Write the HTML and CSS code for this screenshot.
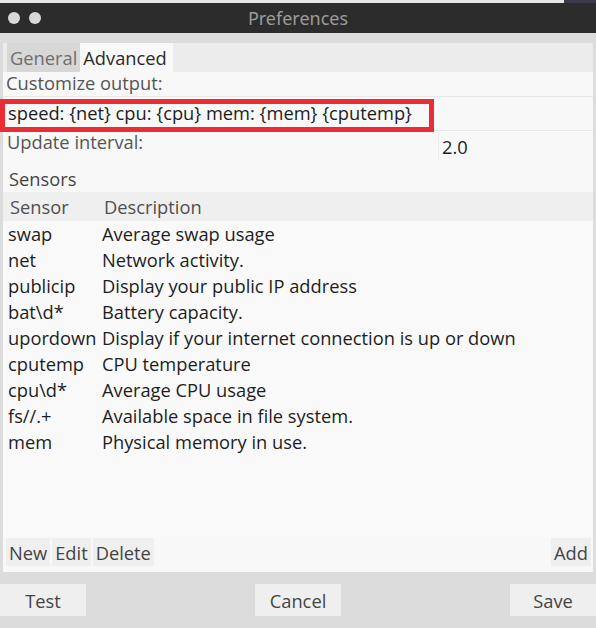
FILE: index.html
```html
<!DOCTYPE html>
<html>
<head>
<meta charset="utf-8">
<link rel="stylesheet" href="styles.css">
</head>
<body>
<div class="screen">
  <div class="topstrip"><div class="desk"></div></div>
  <div class="titlebar">
    <div class="dots"><span class="dot"></span><span class="dot"></span></div>
    <div class="title">Preferences</div>
  </div>
  <div class="window">
    <div class="panel">
      <div class="tabs">
        <div class="tab inactive">General</div>
        <div class="tab active">Advanced</div>
      </div>
      <div class="label customize">Customize output:</div>
      <div class="entry-row">
        <div class="entry">speed: {net} cpu: {cpu} mem: {mem} {cputemp}</div>
        <div class="highlight"></div>
      </div>
      <div class="interval-row">
        <div class="label interval">Update interval:</div>
        <div class="spin">2.0</div>
      </div>
      <div class="sensors-title">Sensors</div>
      <div class="table">
        <div class="thead"><span class="c1">Sensor</span><span class="c2">Description</span></div>
        <div class="row"><span class="c1">swap</span><span class="c2">Average swap usage</span></div>
        <div class="row"><span class="c1">net</span><span class="c2">Network activity.</span></div>
        <div class="row"><span class="c1">publicip</span><span class="c2">Display your public IP address</span></div>
        <div class="row"><span class="c1">bat\d*</span><span class="c2">Battery capacity.</span></div>
        <div class="row"><span class="c1">upordown</span><span class="c2">Display if your internet connection is up or down</span></div>
        <div class="row"><span class="c1">cputemp</span><span class="c2">CPU temperature</span></div>
        <div class="row"><span class="c1">cpu\d*</span><span class="c2">Average CPU usage</span></div>
        <div class="row"><span class="c1">fs//.+</span><span class="c2">Available space in file system.</span></div>
        <div class="row"><span class="c1">mem</span><span class="c2">Physical memory in use.</span></div>
      </div>
      <div class="tablebtns">
        <div class="btn small">New</div>
        <div class="btn small">Edit</div>
        <div class="btn small">Delete</div>
        <div class="spacer"></div>
        <div class="btn small">Add</div>
      </div>
    </div>
    <div class="footer">
      <div class="btn big">Test</div>
      <div class="btn big">Cancel</div>
      <div class="btn big">Save</div>
    </div>
  </div>
</div>
</body>
</html>
```
FILE: styles.css
```css
html, body {
  margin: 0;
  padding: 0;
}
body {
  background: #dcdcdc;
  font-family: "Open Sans", "Noto Sans", sans-serif;
  font-size: 18.3px;
  color: #2a2a2a;
}
.screen {
  width: 596px;
  height: 628px;
  overflow: hidden;
  display: flex;
  flex-direction: column;
}
.topstrip {
  height: 3px;
  background: #e6e6e6;
  display: flex;
  justify-content: flex-end;
}
.desk {
  width: 32px;
  background: #3b3a48;
}
.titlebar {
  height: 30px;
  background: #2c2c2c;
  display: flex;
  align-items: center;
  position: relative;
}
.dots {
  display: flex;
  gap: 9px;
  padding-left: 8px;
}
.dot {
  width: 12px;
  height: 12px;
  border-radius: 50%;
  background: #d9d9d9;
}
.title {
  position: absolute;
  left: 0;
  right: 0;
  text-align: center;
  color: #9b9b9b;
  font-family: "Noto Sans", sans-serif;
  font-size: 18px;
}
.window {
  flex: 1;
  padding: 10px 3px 0 3px;
  display: flex;
  flex-direction: column;
}
.panel {
  height: 529px;
  background: #f8f8f8;
  display: flex;
  flex-direction: column;
}
.tabs {
  height: 29px;
  background: #ececec;
  display: flex;
  padding-left: 4px;
}
.tab {
  display: flex;
  align-items: center;
  padding: 0 3px 0 3px;
  line-height: 29px;
}
.tab.inactive {
  background: #d7d7d7;
  color: #6e6e6e;
}
.tab.active {
  background: #f8f8f8;
  color: #2a2a2a;
  padding-right: 6px;
}
.label {
  color: #555;
}
.customize {
  height: 24px;
  line-height: 22px;
  padding-left: 3px;
}
.entry-row {
  position: relative;
  height: 33px;
  border-top: 1px solid #e8e8e8;
  border-bottom: 1px solid #e8e8e8;
  display: flex;
  align-items: center;
}
.entry {
  padding-left: 5px;
  color: #1e1e1e;
  padding-bottom: 3px;
}
.highlight {
  position: absolute;
  left: -3px;
  top: 2px;
  width: 424px;
  height: 23px;
  border: 5px solid #ea2d33;
}
.interval-row {
  display: flex;
  height: 30px;
}
.interval {
  flex: 0 0 431px;
  padding-left: 4px;
  line-height: 22px;
}
.spin {
  flex: 1;
  border-left: 1px solid #ededed;
  padding-left: 3px;
  line-height: 32px;
  color: #1e1e1e;
}
.sensors-title {
  height: 31px;
  line-height: 36px;
  padding-left: 6px;
  color: #444;
}
.table {
  flex: 1;
  background: #f9f9f9;
}
.thead {
  height: 28px;
  background: #efefef;
  display: flex;
  align-items: center;
  color: #505050;
  padding-bottom: 1px;
}
.row {
  height: 25.9px;
  display: flex;
  align-items: center;
  color: #1e1e1e;
}
.thead .c1 { width: 94px; padding-left: 7px; }
.row .c1 { width: 94px; padding-left: 5px; }
.c2 { white-space: nowrap; }
.tablebtns {
  display: flex;
  gap: 2px;
  padding: 0 2px 6px 3px;
}
.spacer { flex: 1; }
.btn {
  background: #efefef;
  color: #444;
  display: flex;
  align-items: center;
  justify-content: center;
}
.btn.small {
  height: 28px;
  padding: 0 3px;
}
.footer {
  display: flex;
  justify-content: space-between;
  margin: 12px -3px 0 -3px;
}
.btn.big {
  height: 32px;
  width: 86px;
}
```
